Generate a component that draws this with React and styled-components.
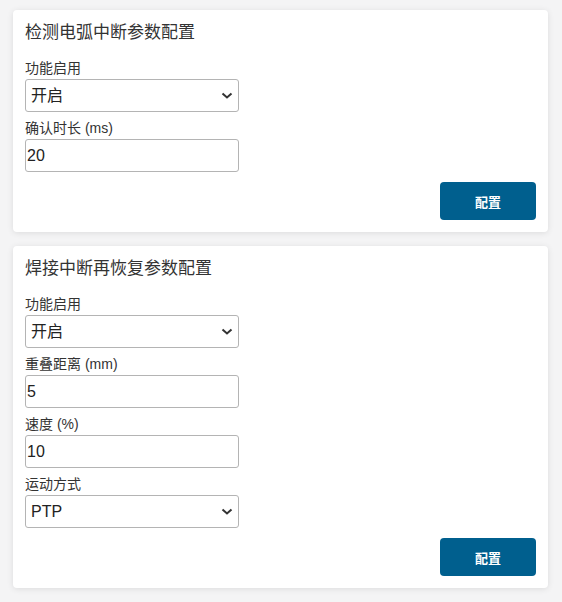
import React from "react";
import styled, { createGlobalStyle } from "styled-components";

const GlobalStyle = createGlobalStyle`
  * { box-sizing: border-box; }
  body {
    margin: 0;
    background: #f4f4f5;
    font-family: "Liberation Sans", "Noto Sans CJK SC", Arial, sans-serif;
    color: #333;
  }
`;

const Page = styled.div`
  display: flex;
  flex-direction: column;
  gap: 14px;
  padding: 10px 14px 10px 13px;
`;

const Card = styled.section`
  background: #fff;
  border-radius: 4px;
  box-shadow: 0 1px 6px rgba(0, 0, 0, 0.1);
  padding: 12px 12px 12px 12px;
  display: flex;
  flex-direction: column;
`;

const Title = styled.h3`
  margin: 0 0 16px;
  font-size: 17px;
  font-weight: 400;
  line-height: 22px;
  color: #333;
`;

const Field = styled.div`
  display: flex;
  flex-direction: column;
  width: 214px;
  margin-bottom: 8px;
`;

const Label = styled.label`
  font-size: 14px;
  line-height: 17px;
  color: #333;
  margin-bottom: 2px;
`;

const Input = styled.input`
  height: 33px;
  width: 100%;
  border: 1px solid #b4b4b4;
  border-radius: 3px;
  padding: 0 6px 0 1px;
  font-family: inherit;
  font-size: 16px;
  color: #222;
  background: #fff;
  outline: none;
`;

const SelectWrap = styled.div`
  position: relative;
  width: 100%;
`;

const Select = styled.select`
  appearance: none;
  -webkit-appearance: none;
  height: 33px;
  width: 100%;
  border: 1px solid #b4b4b4;
  border-radius: 3px;
  padding: 0 28px 0 5px;
  font-family: inherit;
  font-size: 16px;
  color: #222;
  background: #fff;
  outline: none;
`;

const Chevron = styled.svg`
  position: absolute;
  right: 6px;
  top: 12px;
  width: 12px;
  height: 9px;
  pointer-events: none;
`;

const Actions = styled.div`
  display: flex;
  justify-content: flex-end;
  margin-top: 2px;
`;

const Button = styled.button`
  width: 96px;
  height: 38px;
  border: none;
  border-radius: 4px;
  background: #005f8e;
  color: #fff;
  font-family: "Noto Sans CJK SC", sans-serif;
  font-size: 13px;
  font-weight: 700;
  cursor: pointer;
`;

const SelectField = ({ label, value, options }) => (
  <Field>
    <Label>{label}</Label>
    <SelectWrap>
      <Select defaultValue={value}>
        {options.map((o) => (
          <option key={o}>{o}</option>
        ))}
      </Select>
      <Chevron viewBox="0 0 12 9">
        <path d="M1.5 2.5 L6 6.5 L10.5 2.5" fill="none" stroke="#333" strokeWidth="2" />
      </Chevron>
    </SelectWrap>
  </Field>
);

const InputField = ({ label, value }) => (
  <Field>
    <Label>{label}</Label>
    <Input defaultValue={value} />
  </Field>
);

export default function App() {
  return (
    <>
      <GlobalStyle />
      <Page>
        <Card>
          <Title>检测电弧中断参数配置</Title>
          <SelectField label="功能启用" value="开启" options={["开启", "关闭"]} />
          <InputField label="确认时长 (ms)" value="20" />
          <Actions>
            <Button>配置</Button>
          </Actions>
        </Card>
        <Card>
          <Title>焊接中断再恢复参数配置</Title>
          <SelectField label="功能启用" value="开启" options={["开启", "关闭"]} />
          <InputField label="重叠距离 (mm)" value="5" />
          <InputField label="速度 (%)" value="10" />
          <SelectField label="运动方式" value="PTP" options={["PTP", "LIN"]} />
          <Actions>
            <Button>配置</Button>
          </Actions>
        </Card>
      </Page>
    </>
  );
}
